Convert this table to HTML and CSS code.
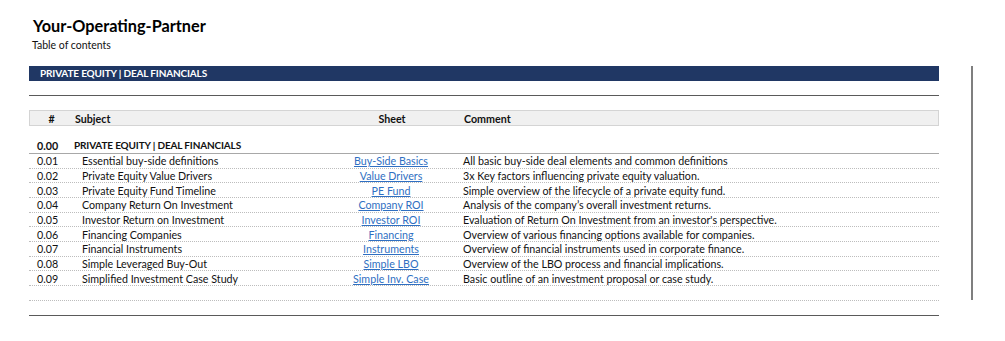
FILE: index.html
```html
<!DOCTYPE html>
<html>
<head>
<meta charset="utf-8">
<link rel="stylesheet" href="styles.css">
</head>
<body>
<div class="page">
  <div class="main">
    <header class="head">
      <h1 class="title">Your-Operating-Partner</h1>
      <div class="subtitle">Table of contents</div>
    </header>
    <div class="bar">PRIVATE EQUITY | DEAL FINANCIALS</div>
    <div class="rule-gap"></div>
    <div class="row hdr">
      <div class="c-num c-center">#</div>
      <div class="c-subj">Subject</div>
      <div class="c-sheet">Sheet</div>
      <div class="c-com">Comment</div>
    </div>
    <div class="blank"></div>
    <div class="row section">
      <div class="c-num">0.00</div>
      <div class="c-subj">PRIVATE EQUITY | DEAL FINANCIALS</div>
      <div class="c-sheet"></div>
      <div class="c-com"></div>
    </div>
    <div class="row item"><div class="c-num">0.01</div><div class="c-subj">Essential buy-side definitions</div><div class="c-sheet"><a href="#">Buy-Side Basics</a></div><div class="c-com">All basic buy-side deal elements and common definitions</div></div>
    <div class="row item"><div class="c-num">0.02</div><div class="c-subj">Private Equity Value Drivers</div><div class="c-sheet"><a href="#">Value Drivers</a></div><div class="c-com">3x Key factors influencing private equity valuation.</div></div>
    <div class="row item"><div class="c-num">0.03</div><div class="c-subj">Private Equity Fund Timeline</div><div class="c-sheet"><a href="#">PE Fund</a></div><div class="c-com">Simple overview of the lifecycle of a private equity fund.</div></div>
    <div class="row item"><div class="c-num">0.04</div><div class="c-subj">Company Return On Investment</div><div class="c-sheet"><a href="#">Company ROI</a></div><div class="c-com">Analysis of the company’s overall investment returns.</div></div>
    <div class="row item"><div class="c-num">0.05</div><div class="c-subj">Investor Return on Investment</div><div class="c-sheet"><a href="#">Investor ROI</a></div><div class="c-com">Evaluation of Return On Investment from an investor's perspective.</div></div>
    <div class="row item"><div class="c-num">0.06</div><div class="c-subj">Financing Companies</div><div class="c-sheet"><a href="#">Financing</a></div><div class="c-com">Overview of various financing options available for companies.</div></div>
    <div class="row item"><div class="c-num">0.07</div><div class="c-subj">Financial Instruments</div><div class="c-sheet"><a href="#">Instruments</a></div><div class="c-com">Overview of financial instruments used in corporate finance.</div></div>
    <div class="row item"><div class="c-num">0.08</div><div class="c-subj">Simple Leveraged Buy-Out</div><div class="c-sheet"><a href="#">Simple LBO</a></div><div class="c-com">Overview of the LBO process and financial implications.</div></div>
    <div class="row item"><div class="c-num">0.09</div><div class="c-subj">Simplified Investment Case Study</div><div class="c-sheet"><a href="#">Simple Inv. Case</a></div><div class="c-com">Basic outline of an investment proposal or case study.</div></div>
    <div class="row item empty"></div>
    <div class="end"></div>
  </div>
  <div class="vline"></div>
</div>
</body>
</html>
```
FILE: styles.css
```css
html, body {
  margin: 0;
  padding: 0;
  background: #fff;
}
body {
  font-family: Lato, "Open Sans", "Liberation Sans", sans-serif;
  font-size: 10.7px;
  color: #111;
}
.page {
  display: flex;
  align-items: flex-start;
  padding-left: 29px;
}
.main {
  width: 910px;
  display: flex;
  flex-direction: column;
}
.head {
  height: 66px;
  padding-left: 4px;
  box-sizing: border-box;
  padding-top: 16px;
}
.title {
  margin: 0;
  font-size: 16.3px;
  font-weight: 700;
  line-height: 20px;
  color: #000;
}
.subtitle {
  margin-left: -1px;
  margin-top: 2px;
  line-height: 14px;
  font-size: 10.5px;
}
.bar {
  height: 15px;
  background: #203764;
  color: #fff;
  font-weight: 700;
  font-size: 10px;
  letter-spacing: -0.15px;
  line-height: 15px;
  padding-left: 11px;
}
.rule-gap {
  height: 14px;
  border-bottom: 1.5px solid #5a5a5a;
}
.row {
  display: grid;
  grid-template-columns: 45px 246px 142px 1fr;
  align-items: center;
}
.c-num { padding-left: 8px; }
.c-center { padding-left: 0; text-align: center; }
.c-sheet { text-align: center; }
.c-com { padding-left: 1px; white-space: nowrap; }
.hdr {
  margin-top: 14px;
  height: 16px;
  box-sizing: border-box;
  background: #f0f0f0;
  border: 1.5px solid #d4d4d4;
  font-weight: 700;
  line-height: 13px;
}
.hdr .c-num { padding-left: 0; margin-left: -2px; }
.blank { height: 13px; }
.section {
  height: 15px;
  box-sizing: border-box;
  border-bottom: 1.5px solid #a8a8a8;
  font-weight: 700;
  line-height: 13px;
  padding-bottom: 3px;
}
.section .c-subj {
  font-size: 10px;
  letter-spacing: -0.15px;
}
.item {
  height: 14.67px;
  box-sizing: border-box;
  border-bottom: 1px dotted #bdbdbd;
  line-height: 13px;
}
.item .c-subj { padding-left: 8px; }
.item a {
  color: #2f6fc2;
  text-decoration: underline;
}
.end {
  height: 15px;
  box-sizing: border-box;
  border-bottom: 1.5px solid #5a5a5a;
}
.vline {
  margin-left: 32px;
  margin-top: 66px;
  width: 2px;
  height: 234px;
  background: #7f7f7f;
}
```
